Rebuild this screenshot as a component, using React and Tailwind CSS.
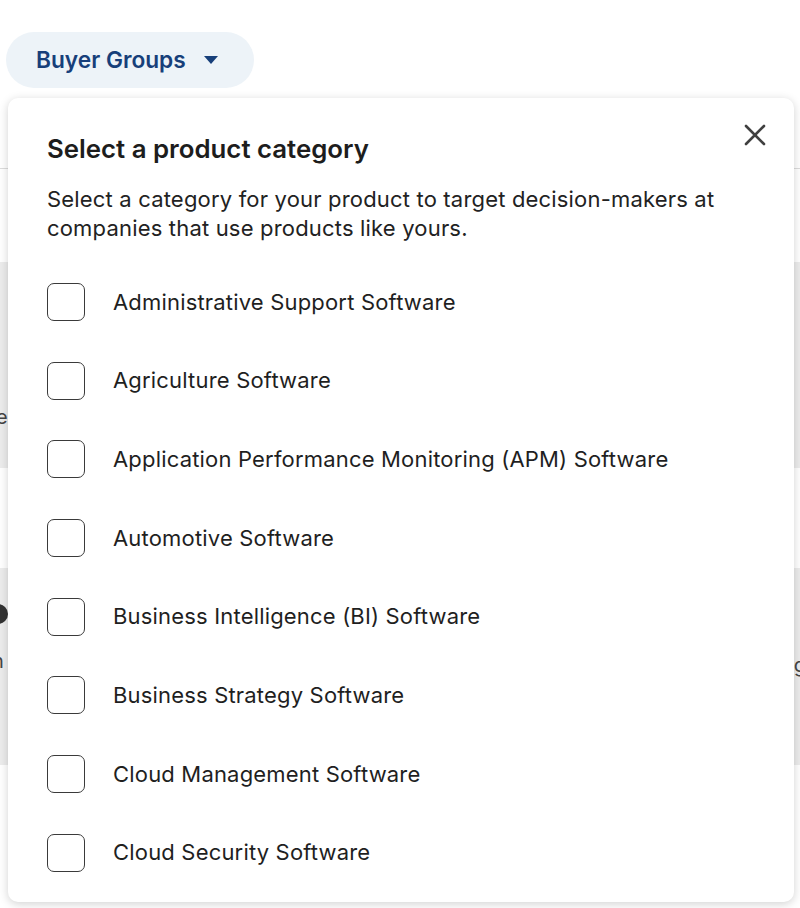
import { useState } from "react";

const categories = [
  "Administrative Support Software",
  "Agriculture Software",
  "Application Performance Monitoring (APM) Software",
  "Automotive Software",
  "Business Intelligence (BI) Software",
  "Business Strategy Software",
  "Cloud Management Software",
  "Cloud Security Software",
];

export default function App() {
  const [checked, setChecked] = useState({});

  return (
    <div
      className="relative w-[800px] h-[908px] overflow-hidden bg-white"
      style={{ fontFamily: "Inter, 'Noto Sans', sans-serif" }}
    >
      {/* Page behind the menu */}
      <div className="pt-[32px] pl-[6px]">
        <button className="flex items-center h-[56px] w-[248px] rounded-full bg-[#edf3f8] pl-[30px] text-[22.7px] font-semibold text-[#173f7a]">
          Buyer Groups
          <svg className="ml-[18px]" width="14" height="9" viewBox="0 0 14 9">
            <path d="M0 0h14L7 8z" fill="#173f7a" />
          </svg>
        </button>
      </div>
      <div className="mt-[80px] border-t border-[#dcdcdc]" />
      <div className="mt-[93px] h-[206px] bg-[#ececec] flex justify-between items-end pb-[36px] text-[20px] text-[#444]">
        <span className="-ml-[4px]">e</span>
        <span />
      </div>
      <div className="mt-[100px] h-[197px] bg-[#ececec] flex justify-between pt-[36px] text-[20px] text-[#444]">
        <div className="flex flex-col -ml-[8px]">
          <div className="w-[20px] h-[20px] rounded-full bg-[#333] -ml-[4px]" />
          <div className="mt-[24px] leading-[26px]">
            n<br />r
          </div>
        </div>
        <div className="pt-[46px] -mr-[6px]">g</div>
      </div>

      {/* Dropdown panel */}
      <div className="absolute left-[8px] top-[98px] w-[786px] h-[804px] rounded-[10px] bg-white shadow-[0_2px_10px_rgba(0,0,0,0.18)] pl-[39px] pr-[28px] pt-[36px]">
        <button className="absolute right-[28px] top-[26px] text-[#404040]">
          <svg width="22" height="22" viewBox="0 0 22 22">
            <path
              d="M2 2L20 20M20 2L2 20"
              stroke="currentColor"
              strokeWidth="2.6"
              strokeLinecap="round"
            />
          </svg>
        </button>
        <h2 className="text-[25.8px] leading-[30px] font-semibold text-[#1d1d1d]">
          Select a product category
        </h2>
        <p className="mt-[21px] text-[22px] leading-[29px] tracking-[0.18px] text-[#222] w-[720px]">
          Select a category for your product to target decision-makers at
          companies that use products like yours.
        </p>
        <ul className="mt-[40px] flex flex-col gap-[40.7px]">
          {categories.map((c) => (
            <li key={c} className="flex items-center h-[38px]">
              <button
                onClick={() => setChecked({ ...checked, [c]: !checked[c] })}
                className="w-[38px] h-[38px] rounded-[7px] border-[1.5px] border-[#3a3a3a] bg-white shrink-0"
              />
              <span className="ml-[28px] text-[22px] tracking-[0.18px] text-[#1f1f1f]">
                {c}
              </span>
            </li>
          ))}
        </ul>
      </div>
    </div>
  );
}
